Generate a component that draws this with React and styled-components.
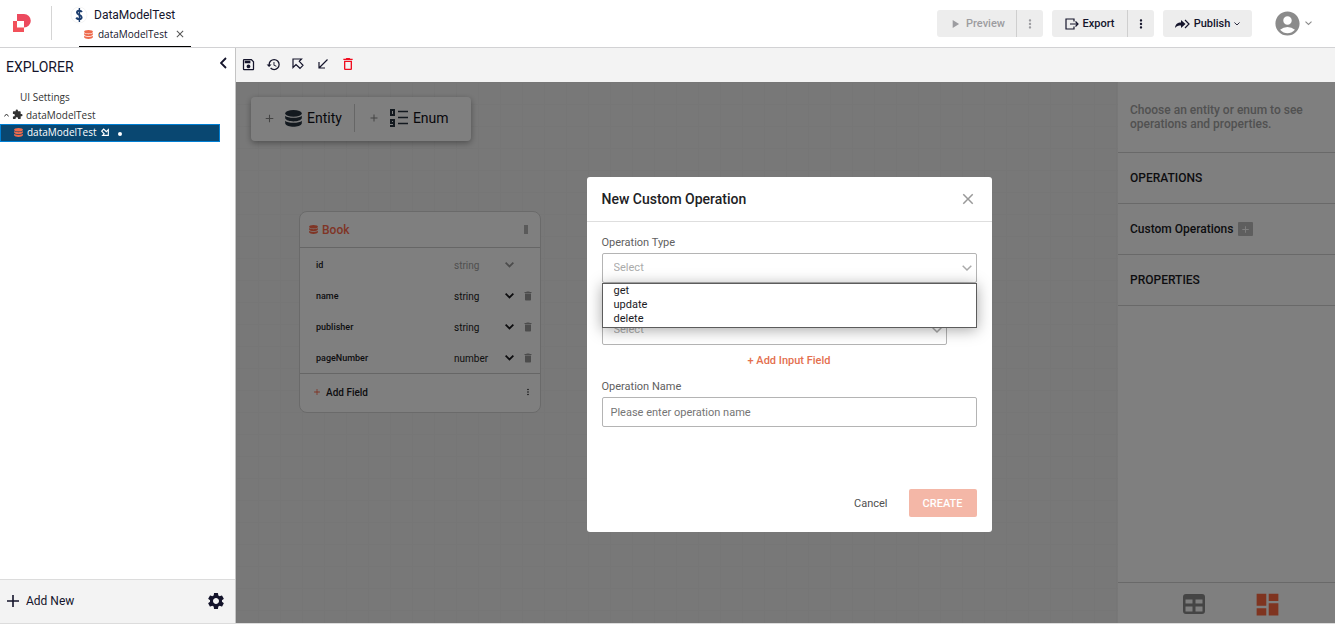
import React from "react";
import styled, { createGlobalStyle, css } from "styled-components";
import {
  MdAccountCircle,
  MdOutlineSave,
  MdHistory,
  MdDeleteOutline,
  MdDelete,
  MdClose,
  MdAdd,
  MdMoreVert,
  MdPlayArrow,
  MdSettings,
  MdExtension,
  MdDashboard,
} from "react-icons/md";

const Global = createGlobalStyle`
  * { box-sizing: border-box; }
  html, body { margin: 0; height: 100%; }
  #root { height: 100%; }
  body { font-family: Roboto, "Liberation Sans", sans-serif; font-size: 12px; color: #1b1b1f; background: #fff; }
  button, input, select { font-family: inherit; }
  button { border: 0; padding: 0; background: none; color: inherit; display: inline-flex; align-items: center; justify-content: center; cursor: pointer; }
  h1, h2, h3, p, ul { margin: 0; padding: 0; font-weight: inherit; }
  svg { display: block; flex: none; }
`;

const Page = styled.div`
  display: flex;
  flex-direction: column;
  height: 100%;
  border-bottom: 1px solid #dcdcdc;
  overflow: hidden;
`;

/* Header */
const Header = styled.header`
  display: flex;
  flex: none;
  height: 48px;
  border-bottom: 1px solid #d2d2d4;
  background: #fff;
`;
const LogoBox = styled.div`
  display: flex;
  align-items: center;
  width: 52px;
  height: 34px;
  margin-top: 6px;
  padding-left: 12px;
  border-right: 1px solid #d5d5d5;
`;
const Project = styled.div`
  display: flex;
  flex-direction: column;
  margin-left: 18px;
`;
const ProjectTitle = styled.h1`
  display: flex;
  align-items: center;
  gap: 6px;
  height: 28px;
  font-size: 12px;
  padding-top: 2px;
  color: #14142b;
`;
const FileTab = styled.div`
  display: flex;
  align-items: center;
  gap: 5px;
  height: 20px;
  margin-left: 9px;
  padding: 0 5px 5px 5px;
  border-bottom: 1px solid #000;
  font-family: "Open Sans", "Noto Sans", sans-serif;
  font-size: 10px;
  color: #14142b;
`;
const TabClose = styled.button`
  margin-left: 1px;
  color: #555;
`;
const HeaderActions = styled.div`
  display: flex;
  align-items: flex-start;
  gap: 9px;
  margin-left: auto;
  padding: 10px 23px 0 0;
`;
const SplitButton = styled.div`
  display: flex;
  height: 27px;
  border-radius: 3px;
  background: #ededed;
  color: ${(p) => (p.$muted ? "#9c9ca0" : "#14142b")};
`;
const MainAction = styled.button`
  gap: 4px;
  width: ${(p) => p.$width}px;
  font-size: 11px;
  font-weight: 500;
`;
const MoreAction = styled.button`
  width: 27px;
  border-left: 1px solid #cfcfcf;
`;
const Account = styled.button`
  gap: 3px;
  margin: -1px 0 0 12px;
  color: #8b8b8b;
`;

/* Explorer */
const Body = styled.div`
  display: flex;
  flex: 1;
  min-height: 0;
`;
const Explorer = styled.aside`
  display: flex;
  flex: none;
  flex-direction: column;
  width: 236px;
  border-right: 1px solid #c4c4c4;
`;
const ExplorerHead = styled.div`
  display: flex;
  justify-content: space-between;
  align-items: flex-start;
  height: 40px;
  padding: 9px 8px 0 6px;
  color: #14142b;
`;
const ExplorerTitle = styled.h2`
  font-size: 14px;
  line-height: 20px;
`;
const Tree = styled.ul`
  list-style: none;
  flex: 1;
  font-family: "Open Sans", "Noto Sans", sans-serif;
  font-size: 10px;
  color: #333;
`;
const TreeItem = styled.li`
  display: flex;
  align-items: center;
  gap: ${(p) => p.$gap || 4}px;
  height: 18px;
  margin-right: 15px;
  padding: 0 0 1px ${(p) => p.$indent}px;
  ${(p) =>
    p.$active &&
    css`
      padding-bottom: 2px;
      color: #fff;
      background: #094771;
      border: 1px solid #007fd4;
    `}
`;
const Dot = styled.span`
  width: 4px;
  height: 4px;
  margin: 4px 0 0 5px;
  border-radius: 50%;
  background: #fff;
`;
const ExplorerFoot = styled.div`
  display: flex;
  align-items: center;
  justify-content: space-between;
  height: 44px;
  padding: 0 9px 2px 6px;
  border-top: 1px solid #dcdcdc;
  background: #f3f3f3;
  color: #14142b;
`;
const AddNew = styled.button`
  gap: 6px;
  font-size: 12px;
`;

/* Editor */
const Editor = styled.main`
  display: flex;
  flex: 1;
  flex-direction: column;
  min-width: 0;
`;
const Toolbar = styled.div`
  display: flex;
  flex: none;
  align-items: center;
  gap: 11px;
  height: 34px;
  padding: 0 0 2px 5px;
  background: #f3f3f3;
  color: #14142b;
`;
const ToolButton = styled.button`
  width: 14px;
  height: 14px;
  color: ${(p) => (p.$danger ? "#f00d20" : "inherit")};
`;
const Workspace = styled.div`
  position: relative;
  display: flex;
  flex: 1;
  min-height: 0;
`;
const Canvas = styled.section`
  position: relative;
  flex: 1;
  padding: 15px;
  background-color: #f1f1f1;
  background-image: linear-gradient(to right, #ececec 1px, transparent 1px),
    linear-gradient(to bottom, #ececec 1px, transparent 1px);
  background-size: 22px 22px;
`;
const Palette = styled.div`
  display: inline-flex;
  align-items: center;
  height: 44px;
  padding-bottom: 2px;
  border-radius: 4px;
  background: #fff;
  box-shadow: 0 2px 6px rgba(0, 0, 0, 0.35);
`;
const PaletteItem = styled.button`
  height: 28px;
  padding: 0 12px;
  font-size: 14px;
  color: #101018;
  & + & {
    padding: 0 22px 0 13px;
    border-left: 1px solid #ccc;
  }
`;
const PaletteIcon = styled.span`
  margin: 0 5px 0 9px;
  color: #26323f;
`;
const EntityCard = styled.article`
  position: absolute;
  left: 63px;
  top: 129px;
  width: 242px;
  border: 1px solid #d4d4d4;
  border-radius: 8px;
  background: #fff;
`;
const EntityHead = styled.header`
  display: flex;
  align-items: center;
  gap: 4px;
  height: 36px;
  padding: 0 12px 0 9px;
  border-bottom: 1px solid #ccc;
  color: #ff6a4b;
  font-size: 12px;
  font-weight: 500;
`;
const Handle = styled.span`
  width: 4px;
  height: 9px;
  margin-left: auto;
  background: #b4b4b4;
`;
const FieldList = styled.ul`
  list-style: none;
  padding-top: 1px;
`;
const FieldRow = styled.li`
  display: grid;
  grid-template-columns: 138px 46px 18px 20px;
  align-items: center;
  height: 31px;
  padding: 1px 0 0 16px;
  font-size: 9px;
  font-weight: 500;
`;
const FieldType = styled.span`
  font-size: 10px;
  font-weight: 400;
  color: ${(p) => (p.$muted ? "#a0a0a0" : "#222")};
`;
const FieldButton = styled.button`
  color: ${(p) => (p.$muted ? "#999" : "#1b1b1f")};
`;
const EntityFoot = styled.footer`
  display: flex;
  align-items: center;
  justify-content: space-between;
  height: 39px;
  padding: 0 7px 2px 12px;
  border-top: 1px solid #ccc;
`;
const AddField = styled.button`
  gap: 4px;
  font-size: 10px;
  font-weight: 500;
`;

/* Properties */
const Side = styled.aside`
  display: flex;
  flex: none;
  flex-direction: column;
  width: 217px;
  background: #fff;
`;
const Hint = styled.p`
  height: 71px;
  padding: 21px 12px 0;
  border-bottom: 1px solid #d2d2d2;
  font-size: 12px;
  line-height: 14px;
  font-weight: 500;
  color: #a3a3a3;
`;
const SideSection = styled.h3`
  display: flex;
  align-items: center;
  gap: 5px;
  height: 51px;
  padding: 0 12px;
  border-bottom: 1px solid #d2d2d2;
  font-size: 12px;
  font-weight: 500;
`;
const SmallAdd = styled.button`
  width: 15px;
  height: 14px;
  border-radius: 1px;
  background: #bdbdbd;
  color: #fff;
`;
const ViewSwitch = styled.div`
  display: flex;
  align-items: center;
  justify-content: center;
  gap: 48px;
  height: 41px;
  margin-top: auto;
  padding: 2px 0 0 11px;
  border-top: 1px solid #d2d2d2;
  color: #8a8a8a;
`;
const ViewButton = styled.button`
  color: ${(p) => (p.$active ? "#ff6840" : "inherit")};
`;

/* Dialog */
const Backdrop = styled.div`
  position: absolute;
  inset: 0;
  background: rgba(0, 0, 0, 0.5);
`;
const Dialog = styled.div`
  position: absolute;
  left: calc(50% - 199px);
  top: 95px;
  display: flex;
  flex-direction: column;
  width: 405px;
  height: 355px;
  border-radius: 3px;
  background: #fff;
`;
const DialogHead = styled.header`
  display: flex;
  align-items: center;
  justify-content: space-between;
  height: 45px;
  padding: 0 15px;
  border-bottom: 1px solid #dedede;
  color: #999;
`;
const DialogTitle = styled.h2`
  font-size: 14px;
  font-weight: 500;
  color: #212124;
`;
const Form = styled.form`
  display: flex;
  flex: 1;
  flex-direction: column;
  padding: 13px 15px 15px;
`;
const Field = styled.div`
  position: relative;
  display: flex;
  flex-direction: column;
  gap: 3px;
`;
const Label = styled.label`
  height: 15px;
  line-height: 15px;
  font-size: 11px;
  color: #606060;
`;
const SelectBox = styled.div`
  display: flex;
  align-items: center;
  height: 30px;
  margin-right: ${(p) => (p.$short ? 30 : 0)}px;
  margin-top: ${(p) => (p.$short ? 32 : 0)}px;
  padding-right: 4px;
  border: 1px solid #b4b4b4;
  border-radius: 2px;
  color: #aaa;
`;
const Select = styled.select`
  flex: 1;
  height: 28px;
  padding: 0 11px 2px;
  border: 0;
  outline: 0;
  appearance: none;
  background: transparent;
  font-size: 11px;
  color: #ababab;
`;
const Options = styled.ul`
  position: absolute;
  z-index: 1;
  top: 48px;
  left: 0;
  right: 0;
  list-style: none;
  height: 45px;
  border: 1px solid #5c5c5c;
  background: #fff;
  box-shadow: 0 2px 14px rgba(0, 0, 0, 0.35);
`;
const Option = styled.li`
  height: 14px;
  padding-left: 11px;
  font-size: 11px;
  line-height: 14px;
  color: #1b1b1f;
`;
const AddInput = styled.button`
  align-self: center;
  height: 16px;
  margin: 7px 0 11px;
  font-size: 11px;
  font-weight: 500;
  color: #e4704f;
`;
const TextInput = styled.input`
  height: 30px;
  padding: 0 8px;
  border: 1px solid #b4b4b4;
  border-radius: 2px;
  font-size: 11px;
  &::placeholder {
    color: #757575;
  }
`;
const DialogActions = styled.div`
  display: flex;
  justify-content: flex-end;
  gap: 21px;
  margin-top: auto;
`;
const Cancel = styled.button`
  font-size: 11px;
  color: #505050;
`;
const Create = styled.button`
  width: 68px;
  height: 28px;
  border-radius: 2px;
  background: #f4b7a7;
  color: #fff;
  font-size: 11px;
  font-weight: 500;
`;

const Chevron = ({ width = 10, stroke = 1.5 }) => (
  <svg width={width} height={width * 0.6} viewBox="0 0 10 6" fill="none" stroke="currentColor" strokeWidth={stroke} overflow="visible">
    <path d="M.7.8 5 5 9.3.8" />
  </svg>
);
const Database = ({ size, color = "currentColor" }) => (
  <svg width={size} height={size} viewBox="0 0 17 18" preserveAspectRatio="none" fill={color}>
    <ellipse cx="8.500" cy="3.600" rx="8.300" ry="3.600" />
    <path d="M.2 6c2.500 3 14.100 3 16.600 0v2.800c-1.500 4.400-15.100 4.400-16.600 0z" />
    <path d="M.2 11.300c2.500 3 14.100 3 16.600 0v3c-1.500 4.600-15.100 4.600-16.600 0z" />
  </svg>
);
const Logo = () => (
  <svg width="20" height="20" viewBox="0 0 20 20">
    <path d="M5 1h7a6.800 6.800 0 0 1 0 13.600V8H5z" fill="#ec4a5e" />
    <path d="M1 8h4v6.500h7V19H1z" fill="#f2515a" />
  </svg>
);
const ProjectIcon = () => (
  <svg width="18" height="18" viewBox="0 0 18 18" fill="none">
    <circle cx="9" cy="9" r="8" stroke="#eee" strokeWidth=".6" />
    <path d="M11.800 6.200C11 4.200 7 4.200 7 6.600s4.600 2.200 4.600 4.600-4 2.600-5.400.4" stroke="#1c3d6e" strokeWidth="2" />
    <path d="M9.400 2v14" stroke="#1c3d6e" strokeWidth="1.400" />
  </svg>
);
const ExportIcon = () => (
  <svg width="14" height="12" viewBox="0 0 14 12" fill="none" stroke="currentColor" strokeWidth="1.200">
    <path d="M9 3.500V1H1v10h8V8.500M5 6h8M10.500 3.500 13 6l-2.500 2.500" />
  </svg>
);
const PublishIcon = () => (
  <svg width="15" height="10" viewBox="0 0 15 10">
    <path d="M0 9c.5-4 2.500-5.500 6-5.500V1l4.500 4L6 9V6.500C3.500 6.500 1.500 7 0 9z" fill="currentColor" />
    <path d="m10 1 4 4-4 4" fill="none" stroke="currentColor" strokeWidth="1.200" />
  </svg>
);
const PointerIcon = () => (
  <svg width="12" height="12" viewBox="0 0 12 12" fill="none" stroke="currentColor" strokeWidth="1.200">
    <path d="M1 1h8.500L7.300 3.300l3.700 4L8 10.300 4 6.500 1 9.500z" />
  </svg>
);
const DownLeftIcon = () => (
  <svg width="10" height="10" viewBox="0 0 10 10" fill="none" stroke="currentColor" strokeWidth="1.200">
    <path d="M9.500.5 1 9M1 3v6h6" />
  </svg>
);
const LinkedIcon = () => (
  <svg width="8" height="8" viewBox="0 0 12 12" fill="none" stroke="currentColor" strokeWidth="1.700">
    <path d="M11 11H2.500l2.200-2.300L1 4.700 4 1.700l4 3.800 3-3z" />
  </svg>
);
const EnumIcon = () => (
  <svg width="19" height="18" viewBox="0 0 19 18" fill="none" stroke="currentColor">
    <path d="M2 1h3v5H2zM5 14H2v-3h3v6H1" strokeWidth="2" />
    <path d="M9 2.500h10M9 8.500h10M9 14.500h10" strokeWidth="1.500" />
  </svg>
);
const TableIcon = () => (
  <svg width="22" height="20" viewBox="0 0 22 20" fill="currentColor" fillRule="evenodd">
    <path d="M3 0h16a3 3 0 0 1 3 3v14a3 3 0 0 1-3 3H3a3 3 0 0 1-3-3V3a3 3 0 0 1 3-3zM2.500 5.500v4h7v-4zM12.500 5.500v4h7v-4zM2.500 12.500v5h7v-5zM12.500 12.500v5h7v-5z" />
  </svg>
);

const fields = [
  { name: "id", type: "string", locked: true },
  { name: "name", type: "string" },
  { name: "publisher", type: "string" },
  { name: "pageNumber", type: "number" },
];

export default function App() {
  return (
    <Page>
      <Global />
      <Header>
        <LogoBox><Logo /></LogoBox>
        <Project>
          <ProjectTitle><ProjectIcon />DataModelTest</ProjectTitle>
          <FileTab>
            <Database size={9} color="#ee6a4c" />
            dataModelTest
            <TabClose aria-label="Close tab"><MdClose size={12} /></TabClose>
          </FileTab>
        </Project>
        <HeaderActions>
          <SplitButton $muted>
            <MainAction $width={79}><MdPlayArrow size={14} />Preview</MainAction>
            <MoreAction aria-label="Preview options"><MdMoreVert size={14} /></MoreAction>
          </SplitButton>
          <SplitButton>
            <MainAction $width={75}><ExportIcon />Export</MainAction>
            <MoreAction aria-label="Export options"><MdMoreVert size={14} /></MoreAction>
          </SplitButton>
          <SplitButton>
            <MainAction $width={89}><PublishIcon />Publish<Chevron width={6} /></MainAction>
          </SplitButton>
          <Account aria-label="Account"><MdAccountCircle size={29} /><Chevron width={7} /></Account>
        </HeaderActions>
      </Header>
      <Body>
        <Explorer>
          <ExplorerHead>
            <ExplorerTitle>EXPLORER</ExplorerTitle>
            <button aria-label="Collapse explorer">
              <svg width="7" height="12" viewBox="0 0 7 12" fill="none" stroke="currentColor" strokeWidth="1.800">
                <path d="M6 1 1 6l5 5" />
              </svg>
            </button>
          </ExplorerHead>
          <Tree>
            <TreeItem $indent={20}>UI Settings</TreeItem>
            <TreeItem $indent={4} $gap={3}>
              <svg width="5" height="4" viewBox="0 0 5 4" fill="none" stroke="currentColor"><path d="M.3 3.500 2.500 1l2.200 2.500" /></svg>
              <MdExtension size={11} />
              dataModelTest
            </TreeItem>
            <TreeItem $indent={13} $active>
              <Database size={9} color="#ee6a4c" />
              dataModelTest
              <LinkedIcon />
              <Dot />
            </TreeItem>
          </Tree>
          <ExplorerFoot>
            <AddNew>
              <svg width="14" height="14" viewBox="0 0 14 14" stroke="currentColor" strokeWidth="1.600"><path d="M7 1v12M1 7h12" /></svg>
              Add New
            </AddNew>
            <button aria-label="Settings"><MdSettings size={20} /></button>
          </ExplorerFoot>
        </Explorer>
        <Editor>
          <Toolbar>
            <ToolButton aria-label="Save"><MdOutlineSave size={15} /></ToolButton>
            <ToolButton aria-label="History"><MdHistory size={15} /></ToolButton>
            <ToolButton aria-label="Select"><PointerIcon /></ToolButton>
            <ToolButton aria-label="Import"><DownLeftIcon /></ToolButton>
            <ToolButton aria-label="Delete" $danger><MdDeleteOutline size={16} /></ToolButton>
          </Toolbar>
          <Workspace>
            <Canvas>
              <Palette>
                <PaletteItem>
                  <MdAdd size={13} color="#888" />
                  <PaletteIcon><Database size={17} /></PaletteIcon>
                  Entity
                </PaletteItem>
                <PaletteItem>
                  <MdAdd size={12} color="#888" />
                  <PaletteIcon><EnumIcon /></PaletteIcon>
                  Enum
                </PaletteItem>
              </Palette>
              <EntityCard>
                <EntityHead><Database size={9} />Book<Handle /></EntityHead>
                <FieldList>
                  {fields.map((f) => (
                    <FieldRow key={f.name}>
                      {f.name}
                      <FieldType $muted={f.locked}>{f.type}</FieldType>
                      <FieldButton $muted={f.locked} aria-label={`Type of ${f.name}`}><Chevron width={9} stroke={2} /></FieldButton>
                      {!f.locked && <FieldButton $muted aria-label={`Delete ${f.name}`}><MdDelete size={12} /></FieldButton>}
                    </FieldRow>
                  ))}
                </FieldList>
                <EntityFoot>
                  <AddField><MdAdd size={10} color="#ff6a4b" />Add Field</AddField>
                  <button aria-label="Entity options"><MdMoreVert size={10} /></button>
                </EntityFoot>
              </EntityCard>
            </Canvas>
            <Side>
              <Hint>Choose an entity or enum to see operations and properties.</Hint>
              <SideSection>OPERATIONS</SideSection>
              <SideSection>
                Custom Operations
                <SmallAdd aria-label="Add custom operation"><MdAdd size={11} /></SmallAdd>
              </SideSection>
              <SideSection>PROPERTIES</SideSection>
              <ViewSwitch>
                <ViewButton aria-label="Table view"><TableIcon /></ViewButton>
                <ViewButton $active aria-label="Board view"><MdDashboard size={29} /></ViewButton>
              </ViewSwitch>
            </Side>
            <Backdrop />
            <Dialog role="dialog" aria-labelledby="dialog-title">
              <DialogHead>
                <DialogTitle id="dialog-title">New Custom Operation</DialogTitle>
                <button aria-label="Close"><MdClose size={18} /></button>
              </DialogHead>
              <Form>
                <Field>
                  <Label htmlFor="op-type">Operation Type</Label>
                  <SelectBox>
                    <Select id="op-type"><option>Select</option></Select>
                    <Chevron />
                  </SelectBox>
                  <Options>
                    <Option>get</Option>
                    <Option>update</Option>
                    <Option>delete</Option>
                  </Options>
                </Field>
                <SelectBox $short>
                  <Select aria-label="Input field"><option>Select</option></Select>
                  <Chevron />
                </SelectBox>
                <AddInput type="button">+ Add Input Field</AddInput>
                <Field>
                  <Label htmlFor="op-name">Operation Name</Label>
                  <TextInput id="op-name" placeholder="Please enter operation name" />
                </Field>
                <DialogActions>
                  <Cancel type="button">Cancel</Cancel>
                  <Create type="button">CREATE</Create>
                </DialogActions>
              </Form>
            </Dialog>
          </Workspace>
        </Editor>
      </Body>
    </Page>
  );
}
